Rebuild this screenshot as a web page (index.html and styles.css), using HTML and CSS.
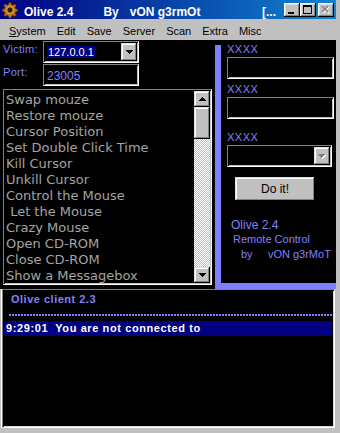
FILE: index.html
```html
<!DOCTYPE html>
<html>
<head>
<meta charset="utf-8">
<link rel="stylesheet" href="styles.css">
</head>
<body>
<div class="window">
  <div class="titlebar">
    <svg class="app-icon" width="16" height="16" viewBox="0 0 16 16">
      <path fill="#c47a1c" stroke="#5a3000" stroke-width="0.8" d="M7 0.5h2l0.4 2.1 1.6 0.7 1.8-1.2 1.4 1.4-1.2 1.8 0.7 1.6 2.1 0.4v2l-2.1 0.4-0.7 1.6 1.2 1.8-1.4 1.4-1.8-1.2-1.6 0.7-0.4 2.1h-2l-0.4-2.1-1.6-0.7-1.8 1.2-1.4-1.4 1.2-1.8-0.7-1.6-2.1-0.4v-2l2.1-0.4 0.7-1.6-1.2-1.8 1.4-1.4 1.8 1.2 1.6-0.7z"/>
      <circle cx="8" cy="8" r="3.3" fill="#3a1a00" stroke="#f0c050" stroke-width="1"/>
    </svg>
    <span class="t-name">Olive 2.4</span>
    <span class="t-by">By</span>
    <span class="t-author">vON g3rmOt</span>
    <span class="t-more">[...</span>
    <div class="tbtn">
      <svg width="16" height="14" viewBox="0 0 16 14"><rect x="4" y="9" width="6" height="2" fill="#000"/></svg>
    </div>
    <div class="tbtn">
      <svg width="16" height="14" viewBox="0 0 16 14"><path d="M3 2h9v9H3zM4 4v6h7V4z" fill="#000" fill-rule="evenodd"/></svg>
    </div>
    <div class="tbtn close">
      <svg width="16" height="14" viewBox="0 0 16 14">
        <path d="M5 4l6 6M11 4l-6 6" stroke="#fff" stroke-width="1.6" fill="none"/>
        <path d="M4 3l6 6M10 3l-6 6" stroke="#808080" stroke-width="1.6" fill="none"/>
      </svg>
    </div>
  </div>

  <div class="menubar">
    <span><u>S</u>ystem</span>
    <span>Edit</span>
    <span>Save</span>
    <span>Server</span>
    <span>Scan</span>
    <span>Extra</span>
    <span>Misc</span>
  </div>

  <div class="client">
    <div class="top">
      <div class="left">
        <div class="field-row first">
          <div class="label">Victim:</div>
          <div class="sunken combo">
            <span class="sel">127.0.0.1</span>
            <div class="raised dd">
              <svg width="7" height="4" viewBox="0 0 7 4"><path d="M0 0h7v1H0zM1 1h5v1H1zM2 2h3v1H2zM3 3h1v1H3z" fill="#000"/></svg>
            </div>
          </div>
        </div>
        <div class="field-row">
          <div class="label">Port:</div>
          <div class="sunken portbox">23005</div>
        </div>
        <div class="sunken listbox">
          <div class="items">
            <div class="item">Swap mouze</div>
            <div class="item">Restore mouze</div>
            <div class="item">Cursor Position</div>
            <div class="item">Set Double Click Time</div>
            <div class="item">Kill Cursor</div>
            <div class="item">Unkill Cursor</div>
            <div class="item">Control the Mouse</div>
            <div class="item"> Let the Mouse</div>
            <div class="item">Crazy Mouse</div>
            <div class="item">Open CD-ROM</div>
            <div class="item">Close CD-ROM</div>
            <div class="item">Show a Messagebox</div>
          </div>
          <div class="vscroll">
            <div class="raised sbtn">
              <svg width="7" height="4" viewBox="0 0 7 4"><path d="M3 0h1v1H3zM2 1h3v1H2zM1 2h5v1H1zM0 3h7v1H0z" fill="#000"/></svg>
            </div>
            <div class="raised thumb"></div>
            <div class="track"></div>
            <div class="raised sbtn">
              <svg width="7" height="4" viewBox="0 0 7 4"><path d="M0 0h7v1H0zM1 1h5v1H1zM2 2h3v1H2zM3 3h1v1H3z" fill="#000"/></svg>
            </div>
          </div>
        </div>
      </div>

      <div class="right">
        <div class="panel">
          <div class="xlabel first">XXXX</div>
          <div class="sunken tbox"></div>
          <div class="xlabel second">XXXX</div>
          <div class="sunken tbox"></div>
          <div class="xlabel third">XXXX</div>
          <div class="sunken combo3">
            <div class="raised dd">
              <svg width="8" height="5" viewBox="0 0 8 5">
                <path d="M1 1h7v1H1zM2 2h5v1H2zM3 3h3v1H3zM4 4h1v1H4z" fill="#fff"/>
                <path d="M0 0h7v1H0zM1 1h5v1H1zM2 2h3v1H2zM3 3h1v1H3z" fill="#808080"/>
              </svg>
            </div>
          </div>
          <div class="raised doit">Do it!</div>
          <div class="info i1">Olive 2.4</div>
          <div class="info i2">Remote Control</div>
          <div class="info i3">by     vON g3rMoT</div>
        </div>
      </div>
    </div>

    <div class="sunken log">
      <div class="log-head">Olive client 2.3</div>
      <div class="dashes"></div>
      <div class="log-line">9:29:01  You are not connected to</div>
    </div>
  </div>
</div>
</body>
</html>
```

FILE: styles.css
```css
* {
  box-sizing: border-box;
  margin: 0;
  padding: 0;
}

body {
  margin: 0;
  background: #c0c0c0;
  font-family: "Liberation Sans", Arial, sans-serif;
}

.window {
  width: 340px;
  height: 433px;
  background: #c0c0c0;
  overflow: hidden;
  display: flex;
  flex-direction: column;
}

/* ---------- title bar ---------- */
.titlebar {
  flex: none;
  width: 336px;
  height: 19px;
  display: flex;
  align-items: flex-start;
  background: linear-gradient(90deg, #000080 0%, #1084d0 100%);
  color: #fff;
  font: bold 12px/14px "Liberation Sans", Arial, sans-serif;
  white-space: nowrap;
}

.app-icon {
  flex: none;
  margin: 2px 0 0 2px;
}

.t-name { margin: 5px 0 0 6px; }
.t-by { margin: 5px 0 0 30px; }
.t-author { margin: 5px 0 0 11px; }
.t-more { margin: 5px 8px 0 auto; }

.tbtn {
  flex: none;
  width: 16px;
  height: 14px;
  margin-top: 3px;
  background: #c0c0c0;
  box-shadow: inset -1px -1px #000, inset 1px 1px #fff, inset -2px -2px #808080, inset 2px 2px #dfdfdf;
}

.tbtn svg { display: block; }

.tbtn.close {
  margin-left: 2px;
  margin-right: 2px;
}

/* ---------- menu bar ---------- */
.menubar {
  flex: none;
  height: 21px;
  display: flex;
  gap: 11px;
  padding: 6px 0 0 9px;
  font: 11px/13px "Liberation Sans", Arial, sans-serif;
  color: #000;
}

.menubar u {
  text-underline-offset: 1px;
}

/* ---------- client ---------- */
.client {
  flex: 1;
  display: flex;
  flex-direction: column;
  padding-right: 4px;
}

.top {
  flex: none;
  height: 249px;
  display: flex;
}

.left {
  width: 215px;
  flex: none;
  background: #000;
  display: flex;
  flex-direction: column;
}

.sunken {
  border: 1px solid;
  border-color: #808080 #fff #fff #808080;
  box-shadow: inset 1px 1px #000, inset -1px -1px #c0c0c0;
  background: #000;
}

.raised {
  background: #c0c0c0;
  box-shadow: inset -1px -1px #000, inset 1px 1px #dfdfdf, inset -2px -2px #808080, inset 2px 2px #fff;
}

.field-row {
  display: flex;
  height: 22px;
  margin-top: 1px;
}

.label {
  width: 43px;
  flex: none;
  padding: 2px 0 0 3px;
  font: 11px/12px "Liberation Sans", Arial, sans-serif;
  letter-spacing: 0.3px;
  color: #8080ff;
}

.combo {
  width: 96px;
  height: 22px;
  display: flex;
  padding: 1px;
}

.sel {
  align-self: flex-start;
  margin: 3px 0 0 2px;
  height: 12px;
  padding: 0 1px;
  background: #000080;
  color: #fff;
  font: 11px/12px "Liberation Sans", Arial, sans-serif;
}

.dd {
  margin-left: auto;
  width: 16px;
  height: 18px;
  display: flex;
  align-items: center;
  justify-content: center;
}

.dd svg { display: block; }

.portbox {
  width: 96px;
  height: 22px;
  padding: 4px 0 0 3px;
  font: 12px/14px "Liberation Sans", Arial, sans-serif;
  color: #8080ff;
}

.listbox {
  margin: 3px 0 0 3px;
  width: 209px;
  height: 196px;
  display: flex;
  padding: 1px;
}

.items {
  flex: 1;
  padding: 1px 0 0 1px;
  font: 13px/16px "DejaVu Sans", sans-serif;
  color: #a4a4a4;
  overflow: hidden;
}

.item {
  height: 16px;
  white-space: pre;
}

.vscroll {
  width: 16px;
  flex: none;
  display: flex;
  flex-direction: column;
}

.sbtn {
  height: 16px;
  flex: none;
  display: flex;
  align-items: center;
  justify-content: center;
}

.sbtn svg { display: block; }

.thumb {
  height: 32px;
  flex: none;
}

.track {
  flex: 1;
  background: repeating-conic-gradient(#fff 0 25%, #c0c0c0 0 50%) 0 0 / 2px 2px;
}

/* ---------- right panel ---------- */
.right {
  flex: 1;
  background: #000;
  padding-top: 5px;
  display: flex;
  flex-direction: column;
}

.panel {
  flex: 1;
  border-left: 6px solid #8080ff;
  border-bottom: 6px solid #8080ff;
  padding-left: 6px;
  display: flex;
  flex-direction: column;
  align-items: flex-start;
}

.xlabel {
  font: 11px/12px "Liberation Sans", Arial, sans-serif;
  letter-spacing: 0.5px;
  color: #8080ff;
}

.xlabel.first { margin-top: -2px; }
.xlabel.second { margin-top: 4px; }
.xlabel.third { margin-top: 12px; }

.tbox {
  margin-top: 2px;
  width: 107px;
  height: 22px;
}

.combo3 {
  margin-top: 2px;
  width: 105px;
  height: 22px;
  padding: 1px;
  display: flex;
}

.doit {
  margin: 10px 0 0 8px;
  width: 80px;
  height: 24px;
  display: flex;
  align-items: center;
  justify-content: center;
  font: 12px/14px "Liberation Sans", Arial, sans-serif;
  color: #000;
}

.info {
  color: #8080ff;
  white-space: pre;
}

.i1 {
  margin: 17px 0 0 4px;
  font: 12px/14px "Liberation Sans", Arial, sans-serif;
}

.i2 {
  margin: 1px 0 0 6px;
  font: 11px/13px "Liberation Sans", Arial, sans-serif;
}

.i3 {
  margin: 2px 0 0 14px;
  font: 11px/13px "Liberation Sans", Arial, sans-serif;
}

/* ---------- log ---------- */
.log {
  flex: none;
  width: 333px;
  height: 139px;
  margin-left: 2px;
  padding: 1px;
  display: flex;
  flex-direction: column;
  box-shadow: inset 1px 1px #000, inset -1px -1px #dfdfdf, -1px 0 #fff;
}

.log-head {
  margin: 2px 0 0 7px;
  font: bold 11px/13px "Liberation Sans", Arial, sans-serif;
  letter-spacing: 0.5px;
  color: #8080ff;
}

.dashes {
  margin: 8px 0 0 5px;
  height: 2px;
  background: repeating-linear-gradient(90deg, #8080ff 0 2px, transparent 2px 3px);
}

.log-line {
  margin: 5px 1px 0 0;
  height: 15px;
  padding-left: 2px;
  background: #000080;
  color: #fff;
  font: bold 11px/15px "Liberation Sans", Arial, sans-serif;
  letter-spacing: 0.6px;
  white-space: pre;
}
```
